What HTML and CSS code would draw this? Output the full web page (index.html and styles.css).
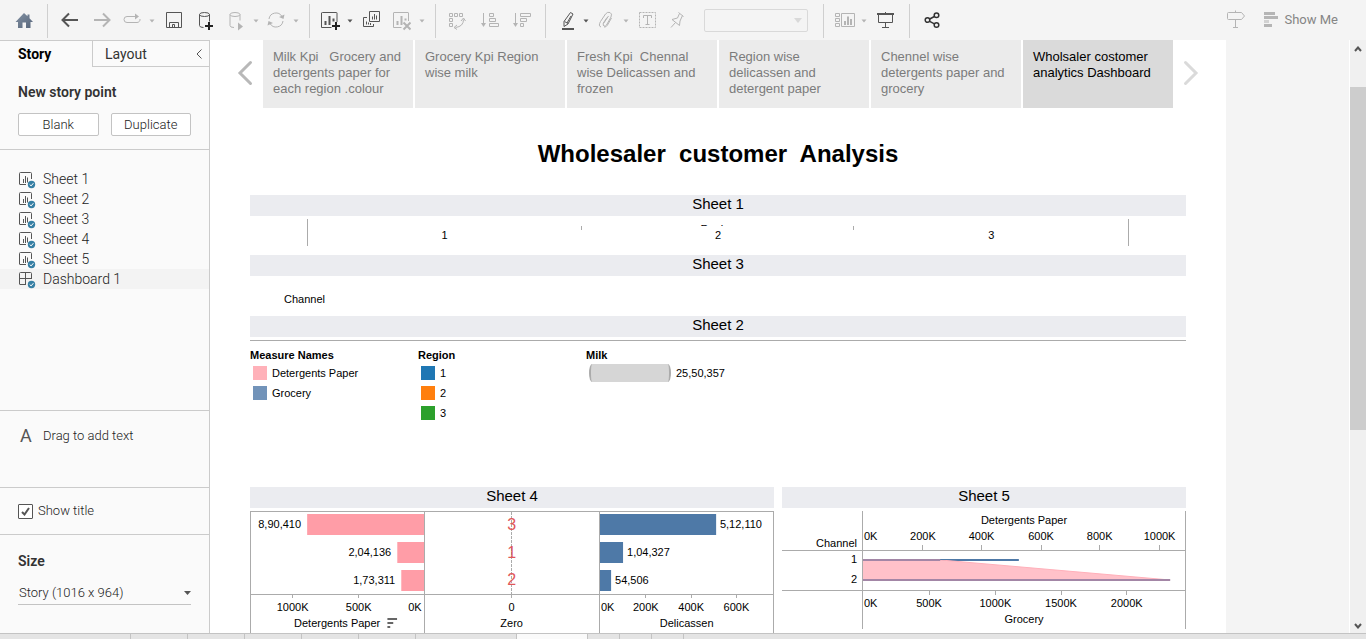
FILE: index.html
```html
<!DOCTYPE html>
<html lang="en">
<head>
<meta charset="utf-8">
<title>Wholesaler customer Analysis</title>
<link rel="stylesheet" href="styles.css">
</head>
<body>
<svg class="defs" aria-hidden="true">
  <symbol id="i-sheet" viewBox="0 0 18 18">
    <path d="M8 12.500H2Q1.500 12.500 1.500 12V1.500Q1.500 .500 2.500 .500H12.500Q13.500 .500 13.500 1.500V7" fill="none" stroke="#555"/>
    <path d="M5.500 7v4M7.500 4v7M9.500 5.500v5" stroke="#555" fill="none"/>
    <circle cx="13.500" cy="12.500" r="3.700" fill="#367fa4"/>
    <path d="M11.700 12.500l1.400 1.400 2.300-2.700" stroke="#fff" fill="none"/>
  </symbol>
  <symbol id="i-dash" viewBox="0 0 18 18">
    <path d="M8 12.500H2Q1.500 12.500 1.500 12V1.500Q1.500 .500 2.500 .500H12.500Q13.500 .500 13.500 1.500V7M7.500 .500v12M1.500 6.500h12" fill="none" stroke="#555"/>
    <circle cx="13.500" cy="12.500" r="3.700" fill="#367fa4"/>
    <path d="M11.700 12.500l1.400 1.400 2.300-2.700" stroke="#fff" fill="none"/>
  </symbol>
  <symbol id="i-caret" viewBox="0 0 6 4"><path d="M.500 .500h5L3 3.500z" fill="currentColor"/></symbol>
</svg>

<header class="toolbar">
  <div class="home"><button class="tool" aria-label="Home"><svg viewBox="0 0 20 20"><defs><linearGradient id="hg" x1="0" y1="0" x2="1" y2="1"><stop offset="0" stop-color="#8391a3"/><stop offset="1" stop-color="#56657a"/></linearGradient></defs><path d="M10 2L1.500 11H4v6h4.500v-5.500h3.500V17h4.500v-6h2.500l-3.500-3.800V3.500h-2v1.700z" fill="url(#hg)"/></svg></button></div>
  <div class="group">
    <button class="tool" aria-label="Back"><svg viewBox="0 0 20 20"><path d="M18 9H3M9 2.500L2.500 9 9 15.500" class="thick"/></svg></button>
    <button class="tool off" aria-label="Forward"><svg viewBox="0 0 20 20"><path d="M2 9h15M11 2.500L17.500 9 11 15.500" class="thick"/></svg></button>
    <button class="tool mid off" aria-label="Redo"><svg viewBox="0 0 20 20"><path d="M14 5.500H5a3 3 0 0 0 0 6h10a3 3 0 0 0 3-3.500"/><path d="M13 2.500L17 5.500 13 8.500z" fill="currentColor" stroke="none"/></svg></button>
    <button class="drop off" aria-label="Redo options"><svg><use href="#i-caret"/></svg></button>
    <button class="tool" aria-label="Save"><svg viewBox="0 0 20 20"><path d="M2.500 1.500h15v15h-15zM5.500 16.500v-5h9v5M8.500 16.500v-3h2v3"/></svg></button>
    <button class="tool" aria-label="New data source"><svg viewBox="0 0 20 20"><ellipse cx="8.500" cy="3.500" rx="5" ry="2"/><path d="M3.500 3.500v11q0 2 4 2M13.500 3.500v7"/><path d="M13 11v8M9 15h8" stroke="#222" stroke-width="2"/></svg></button>
    <button class="tool mid off" aria-label="Pause updates"><svg viewBox="0 0 20 20"><ellipse cx="9" cy="3.500" rx="5" ry="2"/><path d="M4 3.500v11q0 2 4 2M14 3.500v6"/><path d="M12 11.500l5 4-5 4z" fill="currentColor" stroke="none"/></svg></button>
    <button class="drop off" aria-label="Update options"><svg><use href="#i-caret"/></svg></button>
    <button class="tool mid off" aria-label="Refresh"><svg viewBox="0 0 20 20"><path d="M3 8a7 7 0 0 1 13-2.500M17 10a7 7 0 0 1-13 2.500"/><path d="M18.500 3.500L17.500 8 13 6zM1.500 14.500L2.500 10 7 12z" fill="currentColor" stroke="none"/></svg></button>
    <button class="drop off" aria-label="Refresh options"><svg><use href="#i-caret"/></svg></button>
  </div>
  <div class="group">
    <button class="tool mid" aria-label="New worksheet"><svg viewBox="0 0 20 20"><path d="M17 11V2q0-.500-.500-.500h-14Q1.500 1.500 1.500 2v14.500h10"/><path d="M5.500 10v4M9.500 5v9M13.500 7.500v3" stroke-width="2"/><path d="M16 11v8M12 15h8" stroke="#222" stroke-width="2"/></svg></button>
    <button class="drop" aria-label="New worksheet options"><svg><use href="#i-caret"/></svg></button>
    <button class="tool dup" aria-label="Duplicate sheet"><svg viewBox="0 0 20 20"><path d="M8.500 .500h10v10h-10zM6 6.500H2.500v9h10V13M11.500 5.500v3M13.500 3v5.500M15.500 4.500v4M5.500 10.500v3M7.500 11.500v2M9.500 12v2"/></svg></button>
    <button class="tool dup off" aria-label="Clear sheet"><svg viewBox="0 0 20 20"><path d="M17.500 10V2q0-.500-.500-.500H3Q2.500 1.500 2.500 2v14.500h8"/><path d="M6.500 10v4M10.500 5v9M14.500 7.500v2" stroke-width="2"/><path d="M12.500 11.500l7 7M19.500 11.500l-7 7" stroke-width="2"/></svg></button>
    <button class="drop off" aria-label="Clear options"><svg><use href="#i-caret"/></svg></button>
  </div>
  <div class="group">
    <button class="tool off" aria-label="Swap rows and columns"><svg viewBox="0 0 20 20"><path d="M1.500 2.500h3v3h-3zM6.500 2.500h3v3h-3zM11.500 2.500h3v3h-3zM1.500 7.500h3v3h-3zM1.500 12.500h3v3h-3zM15.500 8.500q0 7-8 8M13 10l2.500-3 2 3M9 14l-3 2.500 3 2"/></svg></button>
    <button class="tool off" aria-label="Sort ascending"><svg viewBox="0 0 20 20"><path d="M3.500 2v12M9.500 2.500h4v3h-4zM9.500 7.500h6v3h-6zM9.500 12.500h9v3h-9z"/><path d="M1 12h5l-2.500 4z" fill="currentColor" stroke="none"/></svg></button>
    <button class="tool off" aria-label="Sort descending"><svg viewBox="0 0 20 20"><path d="M3.500 2v12M8.500 2.500h10v3h-10zM8.500 7.500h6v3h-6zM8.500 12.500h3v3h-3z"/><path d="M1 12h5l-2.500 4z" fill="currentColor" stroke="none"/></svg></button>
  </div>
  <div class="group">
    <button class="tool mid" aria-label="Highlight"><svg viewBox="0 0 20 20"><path d="M14.500 1.500l2.500 1.500-5 10-4 2.500 0-5zM8.500 10.500l3.500 2M15 5l-4 7"/><path d="M6 18h12" stroke-width="2"/></svg></button>
    <button class="drop" aria-label="Highlight options"><svg><use href="#i-caret"/></svg></button>
    <button class="tool mid off" aria-label="Group members"><svg viewBox="0 0 20 20"><path d="M12.500 5L7.500 12.500q-1 2 .500 2.500t2.500-1L15 6q1.500-3.500-1-4.500T9.500 3L4.500 10.500Q2 15 5 16M8 16q2 .500 3.500-2l4-7M11 6.500l-4 6"/></svg></button>
    <button class="drop off" aria-label="Group options"><svg><use href="#i-caret"/></svg></button>
    <button class="tool off" aria-label="Show mark labels"><svg viewBox="0 0 20 20"><path d="M1.500 1.500h16v15h-16z" stroke-dasharray="2 1"/><path d="M5.500 7V4.500h8V7M9.500 4.500v9M7.500 13.500h4"/></svg></button>
    <button class="tool mid off" aria-label="Fix axes"><svg viewBox="0 0 20 20"><path d="M10.500 1.500l5 4M11.500 2.500L9.500 7 4 8.500l7.500 6L12 10l2.500-5.500M7.500 11.500L3 16.500"/></svg></button>
    <select class="fit" aria-label="Fit" disabled><option></option></select>
  </div>
  <div class="group">
    <button class="tool mid off" aria-label="Show cards"><svg class="wide" viewBox="0 0 22 20"><path d="M2.500 2.500h4v3h-4zM2.500 7.500h4v3h-4zM2.500 12.500h4v3h-4zM8.500 2.500h13v13h-13z"/><path d="M12 10v4M15 5.500V14M18 8v6" stroke-width="2"/></svg></button>
    <button class="drop off" aria-label="Card options"><svg><use href="#i-caret"/></svg></button>
    <button class="tool" aria-label="Presentation mode"><svg viewBox="0 0 20 20"><path d="M1 3h17" stroke-width="2"/><path d="M2.500 3v8.500h14V3M9.500 1v2M9.500 11.500v5M6 16.500h7"/></svg></button>
  </div>
  <div class="group">
    <button class="tool" aria-label="Share"><svg viewBox="0 0 20 20"><g stroke="#333" stroke-width="1.500"><circle cx="5.500" cy="9" r="2.300"/><circle cx="14.500" cy="4.300" r="2.300"/><circle cx="14.500" cy="14" r="2.300"/><path d="M7.700 8l4.700-2.500M7.700 10.300l4.700 2.500"/></g></svg></button>
  </div>
  <div class="end">
    <button class="tool off" aria-label="Guide"><svg viewBox="0 0 20 20"><path d="M2.500 2.500h13l3 3.500-3 3.500h-13q-1 0-1-1v-5q0-1 1-1zM9.500 .500v2M9.500 9.500v8M7 17.500h5"/></svg></button>
    <button class="show-me"><svg viewBox="0 0 14 16"><path d="M0 0h11v3H0zM0 4h14v3H0zM0 12h8v3H0z" fill="#b5b5b5"/><path d="M0 8h5v3H0z" fill="#d2d2d2"/></svg>Show Me</button>
  </div>
</header>

<div class="workspace">
  <aside class="side">
    <div class="tabs">
      <button class="tab on">Story</button>
      <button class="tab">Layout<svg viewBox="0 0 6 10"><path d="M5.500 .500L1 5l4.500 4.500" fill="none" stroke="#555"/></svg></button>
    </div>
    <section class="new-point">
      <h2>New story point</h2>
      <div class="pair"><button class="btn">Blank</button><button class="btn">Duplicate</button></div>
    </section>
    <ul class="sheets">
      <li><svg><use href="#i-sheet"/></svg>Sheet 1</li>
      <li><svg><use href="#i-sheet"/></svg>Sheet 2</li>
      <li><svg><use href="#i-sheet"/></svg>Sheet 3</li>
      <li><svg><use href="#i-sheet"/></svg>Sheet 4</li>
      <li><svg><use href="#i-sheet"/></svg>Sheet 5</li>
      <li class="hover"><svg><use href="#i-dash"/></svg>Dashboard 1</li>
    </ul>
    <div class="drag"><span class="glyph">A</span>Drag to add text</div>
    <div class="show-title"><input type="checkbox" id="show-title" checked><label for="show-title">Show title</label></div>
    <section class="size">
      <h2><label for="size">Size</label></h2>
      <select id="size"><option>Story (1016 x 964)</option></select>
    </section>
  </aside>

  <main class="story">
    <nav class="points">
      <button class="step" aria-label="Previous"><svg viewBox="0 0 16 26"><path d="M13.500 2.500L3 13l10.500 10.500" stroke="#b8b8b8"/></svg></button>
      <button class="point">Milk Kpi &nbsp; Grocery and detergents paper for each region .colour</button>
      <button class="point">Grocery Kpi Region wise milk</button>
      <button class="point">Fresh Kpi&nbsp; Chennal wise Delicassen and frozen</button>
      <button class="point">Region wise delicassen and detergent paper</button>
      <button class="point">Chennel wise detergents paper and grocery</button>
      <button class="point on">Wholsaler costomer analytics Dashboard</button>
      <button class="step" aria-label="Next"><svg viewBox="0 0 16 26"><path d="M2.500 2.500L13 13 2.500 23.500" stroke="#dadada"/></svg></button>
    </nav>

    <div class="dash">
      <h1>Wholesaler&nbsp; customer&nbsp; Analysis</h1>

      <section class="sheet1">
        <h3>Sheet 1</h3>
        <div class="regions">
          <div class="field">Region</div>
          <div class="cells"><span>1</span><span>2</span><span>3</span></div>
        </div>
      </section>

      <section>
        <h3>Sheet 3</h3>
        <p class="channel">Channel</p>
      </section>

      <section>
        <h3>Sheet 2</h3>
        <hr>
      </section>

      <div class="legends">
        <section><h4>Measure Names</h4>
          <ul><li><i class="pink"></i>Detergents Paper</li><li><i class="steel"></i>Grocery</li></ul></section>
        <section><h4>Region</h4>
          <ul><li><i class="blue"></i>1</li><li><i class="orange"></i>2</li><li><i class="green"></i>3</li></ul></section>
        <section><h4>Milk</h4>
          <ul><li><i class="size-mark"></i>25,50,357</li></ul></section>
      </div>

      <div class="charts">
        <section>
          <h3>Sheet 4</h3>
          <div class="panes">
            <svg>
              <g fill="#ff9da7"><rect x="32.4%" y="2" width="67.6%" height="21"/><rect x="84.400%" y="30" width="15.600%" height="21"/><rect x="86.700%" y="58" width="13.300%" height="21"/></g>
              <g class="end-text value"><text x="28.9%" y="16">8,90,410</text><text x="80.9%" y="44">2,04,136</text><text x="83.2%" y="72">1,73,311</text></g>
              <text class="end-text" x="98.500%" y="99">0K</text>
              <path class="rule" d="M0 82.500H2000"/>
              <line class="rule" x1="24%" x2="24%" y1="83" y2="86"/><line class="rule" x1="62.1%" x2="62.1%" y1="83" y2="86"/>
              <g class="mid-text"><text x="24%" y="99">1000K</text><text x="62.1%" y="99">500K</text><text x="49.700%" y="115">Detergents Paper</text></g>
              <svg x="78.600%" y="106" width="10" height="10"><path d="M0 0h10v2H0zM0 4h6v2H0zM0 8h3v2H0z" fill="#666"/></svg>
            </svg>
            <svg>
              <line class="rule" x1="50%" x2="50%" y1="0" y2="82" stroke-dasharray="3 1"/>
              <g class="marks"><text x="50%" y="18">3</text><text x="50%" y="46">1</text><text x="50%" y="73">2</text></g>
              <path class="rule" d="M0 82.500H2000"/>
              <line class="rule" x1="50%" x2="50%" y1="83" y2="86"/>
              <g class="mid-text"><text x="50%" y="99">0</text><text x="50%" y="115">Zero</text></g>
            </svg>
            <svg>
              <g fill="#4e79a7"><rect y="2" width="67%" height="21"/><rect y="30" width="13.300%" height="21"/><rect y="58" width="6.400%" height="21"/></g>
              <g class="value"><text x="69.200%" y="16">5,12,110</text><text x="15.600%" y="44">1,04,327</text><text x="8.700%" y="72">54,506</text></g>
              <text x="1" y="99">0K</text>
              <path class="rule" d="M0 82.500H2000"/>
              <line class="rule" x1="26.4%" x2="26.4%" y1="83" y2="86"/><line class="rule" x1="52.600%" x2="52.600%" y1="83" y2="86"/><line class="rule" x1="78.700%" x2="78.700%" y1="83" y2="86"/>
              <g class="mid-text"><text x="26.4%" y="99">200K</text><text x="52.600%" y="99">400K</text><text x="78.700%" y="99">600K</text><text x="50%" y="115">Delicassen</text></g>
            </svg>
          </div>
        </section>
        <section>
          <h3>Sheet 5</h3>
          <div class="dual">
            <svg class="heads">
              <g class="end-text"><text x="75" y="36">Channel</text><text x="75" y="52">1</text><text x="75" y="72">2</text></g>
              <path class="rule" d="M0 39.500H80M0 79.500H80"/>
            </svg>
            <svg class="plot">
              <line x1="0" x2="48.400%" y1="49" y2="49" stroke="#4e79a7" stroke-width="2"/>
              <svg x="0" y="49" width="95.400%" height="20" viewBox="0 0 308 20" preserveAspectRatio="none"><path d="M0 0H78L308 20H0z" fill="#ffc1c9"/><path d="M78 0L308 20" stroke="#ffb0ba" fill="none"/></svg>
              <g stroke="#a386a6" stroke-width="2"><line x1="0" x2="24%" y1="49" y2="49"/><line x1="0" x2="95.400%" y1="69" y2="69"/></g>
              <path class="rule" d="M0 39.500H2000M0 79.500H2000"/>
              <g class="rule"><line x1="18.600%" x2="18.600%" y1="34" y2="39"/><line x1="36.800%" x2="36.800%" y1="34" y2="39"/><line x1="55.300%" x2="55.300%" y1="34" y2="39"/><line x1="73.500%" x2="73.500%" y1="34" y2="39"/><line x1="92.100%" x2="92.100%" y1="34" y2="39"/>
              <line x1="20.500%" x2="20.500%" y1="80" y2="84"/><line x1="41.100%" x2="41.100%" y1="80" y2="84"/><line x1="61.500%" x2="61.500%" y1="80" y2="84"/><line x1="81.900%" x2="81.900%" y1="80" y2="84"/></g>
              <text x="1" y="29">0K</text><text x="1" y="96">0K</text>
              <g class="mid-text"><text x="50%" y="13">Detergents Paper</text><text x="18.600%" y="29">200K</text><text x="36.800%" y="29">400K</text><text x="55.300%" y="29">600K</text><text x="73.500%" y="29">800K</text><text x="92.100%" y="29">1000K</text>
              <text x="20.500%" y="96">500K</text><text x="41.100%" y="96">1000K</text><text x="61.500%" y="96">1500K</text><text x="81.900%" y="96">2000K</text><text x="50%" y="112">Grocery</text></g>
            </svg>
          </div>
        </section>
      </div>
    </div>
  </main>
  <div class="gutter"></div>
  <div class="scroll">
    <svg viewBox="0 0 8 6"><path d="M1 5l3-3.500L7 5" /></svg>
    <div class="track"><div class="thumb"></div></div>
    <svg viewBox="0 0 8 6"><path d="M1 1l3 3.500L7 1"/></svg>
  </div>
</div>
<footer class="strip"><i class="first"></i><i></i><i></i><i></i><i></i><i></i><i class="wide"></i><i class="active"></i><i class="small"></i><i class="small"></i><i class="small"></i></footer>
</body>
</html>
```
FILE: styles.css
```css
* { box-sizing: border-box; }
body {
  margin: 0;
  height: 100vh;
  display: flex;
  flex-direction: column;
  overflow: hidden;
  font: 13px/16px Roboto, sans-serif;
  color: #444;
  background: #f4f4f4;
}
button { font: inherit; color: inherit; padding: 0; border: 0; background: none; }
ul { list-style: none; margin: 0; padding: 0; }
h1, h2, h3, h4, p { margin: 0; }
.defs { position: absolute; width: 0; height: 0; }

/* toolbar */
.toolbar { display: flex; align-items: center; height: 40px; flex: none; padding-right: 28px; }
.home, .group { display: flex; align-items: center; height: 34px; margin-top: 1px; border-right: 1px solid #cfcfcf; }
.home { width: 48px; justify-content: center; }
.group { padding: 0 7px 0 6px; }
.group:nth-last-child(2) { border-right: 0; }
.tool, .drop { display: flex; justify-content: center; align-items: center; width: 32px; color: #555; }
.tool.mid { width: 28px; }
.tool.dup { width: 30px; }
.drop { width: 12px; }
.toolbar .off { color: #b4b4b4; }
.tool svg { width: 20px; height: 20px; flex: none; fill: none; stroke: currentColor; }
.tool .wide { width: 22px; }
.tool svg .thick { stroke-width: 2; }
.home svg { stroke: none; }
.drop svg { width: 6px; height: 4px; }
.fit {
  appearance: none;
  width: 104px;
  height: 23px;
  margin: 0 8px 0 12px;
  border: 1px solid #cfcfcf;
  border-radius: 2px;
  background: #f4f4f4 url("data:image/svg+xml,%3Csvg xmlns='http://www.w3.org/2000/svg' width='8' height='5'%3E%3Cpath d='M0 0h8L4 5z' fill='%23cfcfcf'/%3E%3C/svg%3E") no-repeat right 5px center;
}
.end { display: flex; align-items: center; margin-left: auto; gap: 12px; }
.show-me { display: flex; align-items: center; gap: 6px; font-size: 13px; color: #858585; }
.show-me svg { width: 14px; height: 16px; }

/* workspace */
.workspace { display: flex; flex: 1; min-height: 0; }
.side { width: 210px; flex: none; background: #fafafa; border: solid #cbcbcb; border-width: 1px 1px 0 0; font-weight: 300; color: #222; }
.side h2 { font-size: 14px; font-weight: 600; color: #333; }
.tabs { display: flex; height: 26px; font-size: 14px; font-weight: 400; color: #333; }
.tab { display: flex; align-items: center; justify-content: space-between; flex: 1; padding: 0 7px 0 12px; border: solid #cbcbcb; border-width: 0 0 1px 1px; }
.tab.on { flex: 0 0 92px; padding-left: 18px; border: 0; font-weight: 700; color: #000; }
.tab svg { width: 6px; height: 10px; }
.new-point { padding: 17px 18px 13px; border-bottom: 1px solid #cbcbcb; }
.pair { display: flex; gap: 12px; margin-top: 13px; }
.btn { flex: 1; height: 23px; border: 1px solid #c3c3c3; border-radius: 2px; background: #fff; }
.sheets { height: 260px; padding-top: 19px; font-size: 14px; }
.sheets li { display: flex; align-items: center; height: 20px; padding-left: 18px; gap: 7px; }
.sheets svg { width: 18px; height: 18px; margin-top: 3px; }
.sheets .hover { background: #f3f3f3; }
.drag { display: flex; align-items: center; height: 78px; padding: 0 0 27px 20px; border: solid #cbcbcb; border-width: 1px 0; }
.glyph { width: 23px; font-size: 18px; font-weight: 400; color: #555; }
.show-title { display: flex; align-items: center; gap: 5px; height: 47px; padding-left: 18px; border-bottom: 1px solid #cbcbcb; }
.show-title input {
  appearance: none;
  width: 15px;
  height: 15px;
  margin: 0;
  border: 1px solid #555;
  border-radius: 1px;
  background: #fff url("data:image/svg+xml,%3Csvg xmlns='http://www.w3.org/2000/svg' width='9' height='9'%3E%3Cpath d='M1 5l2.500 2.500L8 1' fill='none' stroke='%23555' stroke-width='2'/%3E%3C/svg%3E") no-repeat center;
}
.size { padding: 18px; }
.size select {
  appearance: none;
  width: 100%;
  height: 24px;
  margin-top: 12px;
  padding: 0 1px;
  border: 0;
  border-bottom: 1px solid #c3c3c3;
  font: 300 13px Roboto, sans-serif;
  color: #222;
  background: url("data:image/svg+xml,%3Csvg xmlns='http://www.w3.org/2000/svg' width='7' height='4'%3E%3Cpath d='M0 0h7L3.500 4z' fill='%23555'/%3E%3C/svg%3E") no-repeat right center;
}

/* story */
.story { flex: 1; min-width: 0; overflow: hidden; background: #fff; font-family: "Liberation Sans", sans-serif; }
.points { display: flex; gap: 2px; height: 68px; font-size: 13px; color: #7b7b7b; }
.step { flex: 0 0 51px; display: flex; align-items: center; justify-content: flex-end; padding: 0 8px; margin-top: -3px; }
.step:last-child { justify-content: flex-start; }
.step svg { width: 16px; height: 26px; fill: none; stroke-width: 3; stroke-linecap: round; }
.point { flex: 1; display: flex; align-items: flex-start; padding: 9px 8px 0 10px; text-align: left; background: #ebebeb; }
.point.on { background: #dadada; color: #000; }
.dash { padding: 0 40px; font-size: 11px; color: #000; }
h1 { margin: 32px 0 27px; font-size: 24px; line-height: 28px; text-align: center; color: #000; }
h3 { padding-bottom: 4px; font-size: 15px; font-weight: 400; line-height: 17px; text-align: center; background: #ebecf0; }
.regions { height: 27px; margin: 3px 57px 9px; padding-top: 4px; border: solid #ababab; border-width: 0 1px; text-align: center; }
.field { height: 3px; line-height: 12px; overflow: hidden; }
.cells { display: grid; grid-template-columns: repeat(3, 1fr); line-height: 18px; background: linear-gradient(#ababab, #ababab) 33.300% 0 / 1px 4px no-repeat, linear-gradient(#ababab, #ababab) 66.600% 0 / 1px 4px no-repeat; }
.channel { padding: 15px 34px 9px; }
hr { margin: 3px 0 6px; border: 0; border-top: 1px solid #ababab; }
.legends { display: grid; grid-template-columns: 168px 168px 1fr; height: 140px; }
.legends h4 { font-size: 11px; }
.legends li { display: flex; align-items: center; height: 20px; padding-left: 3px; gap: 5px; }
.legends i { width: 14px; height: 14px; }
.pink { background: #ffb1b9; }
.steel { background: #7293b9; }
.blue { background: #1f77b4; }
.orange { background: #ff7f0e; }
.green { background: #2ca02c; }
.legends .size-mark { width: 82px; height: 18px; border: solid #ababab; border-width: 0 2px; border-radius: 3px / 9px; background: #d6d6d6; }
.charts { display: grid; grid-template-columns: 524fr 404fr; gap: 8px; }
.charts svg { display: block; font-size: 11px; fill: #000; }
.rule { stroke: #ababab; shape-rendering: crispEdges; }
.mid-text { text-anchor: middle; }
.end-text { text-anchor: end; }
.marks { text-anchor: middle; font-size: 16px; fill: #e15759; }
.panes { display: grid; grid-template-columns: repeat(3, 1fr); margin-top: 3px; border: solid #ababab; border-width: 1px 0 0 1px; }
.panes > svg { width: 100%; height: 140px; border-right: 1px solid #ababab; }
.dual { display: flex; height: 118px; margin-top: 3px; }
.heads { width: 80px; height: 118px; }
.plot { flex: 1; min-width: 0; height: 118px; border: solid #ababab; border-width: 0 1px; }

.gutter { flex: 0 0 123px; }
.scroll { display: flex; flex-direction: column; align-items: center; width: 17px; padding: 6px 0 4px; border-left: 1px solid #fff; background: #f0f0f0; }
.scroll svg { width: 8px; height: 6px; fill: none; stroke: #555; stroke-width: 2; }
.track { flex: 1; width: 100%; padding: 35px 0 193px; }
.thumb { height: 100%; background: #cdcdcd; }

/* sheet tab strip */
.strip { display: flex; height: 6px; flex: none; border-top: 1px solid #c3c3c3; background: #e4e4e4; }
.strip i { width: 57px; border-right: 1px solid #c3c3c3; }
.strip .first { width: 131px; }
.strip .wide { width: 101px; }
.strip .active { width: 71px; background: #fafafa; }
.strip .small { width: 32px; }
```
